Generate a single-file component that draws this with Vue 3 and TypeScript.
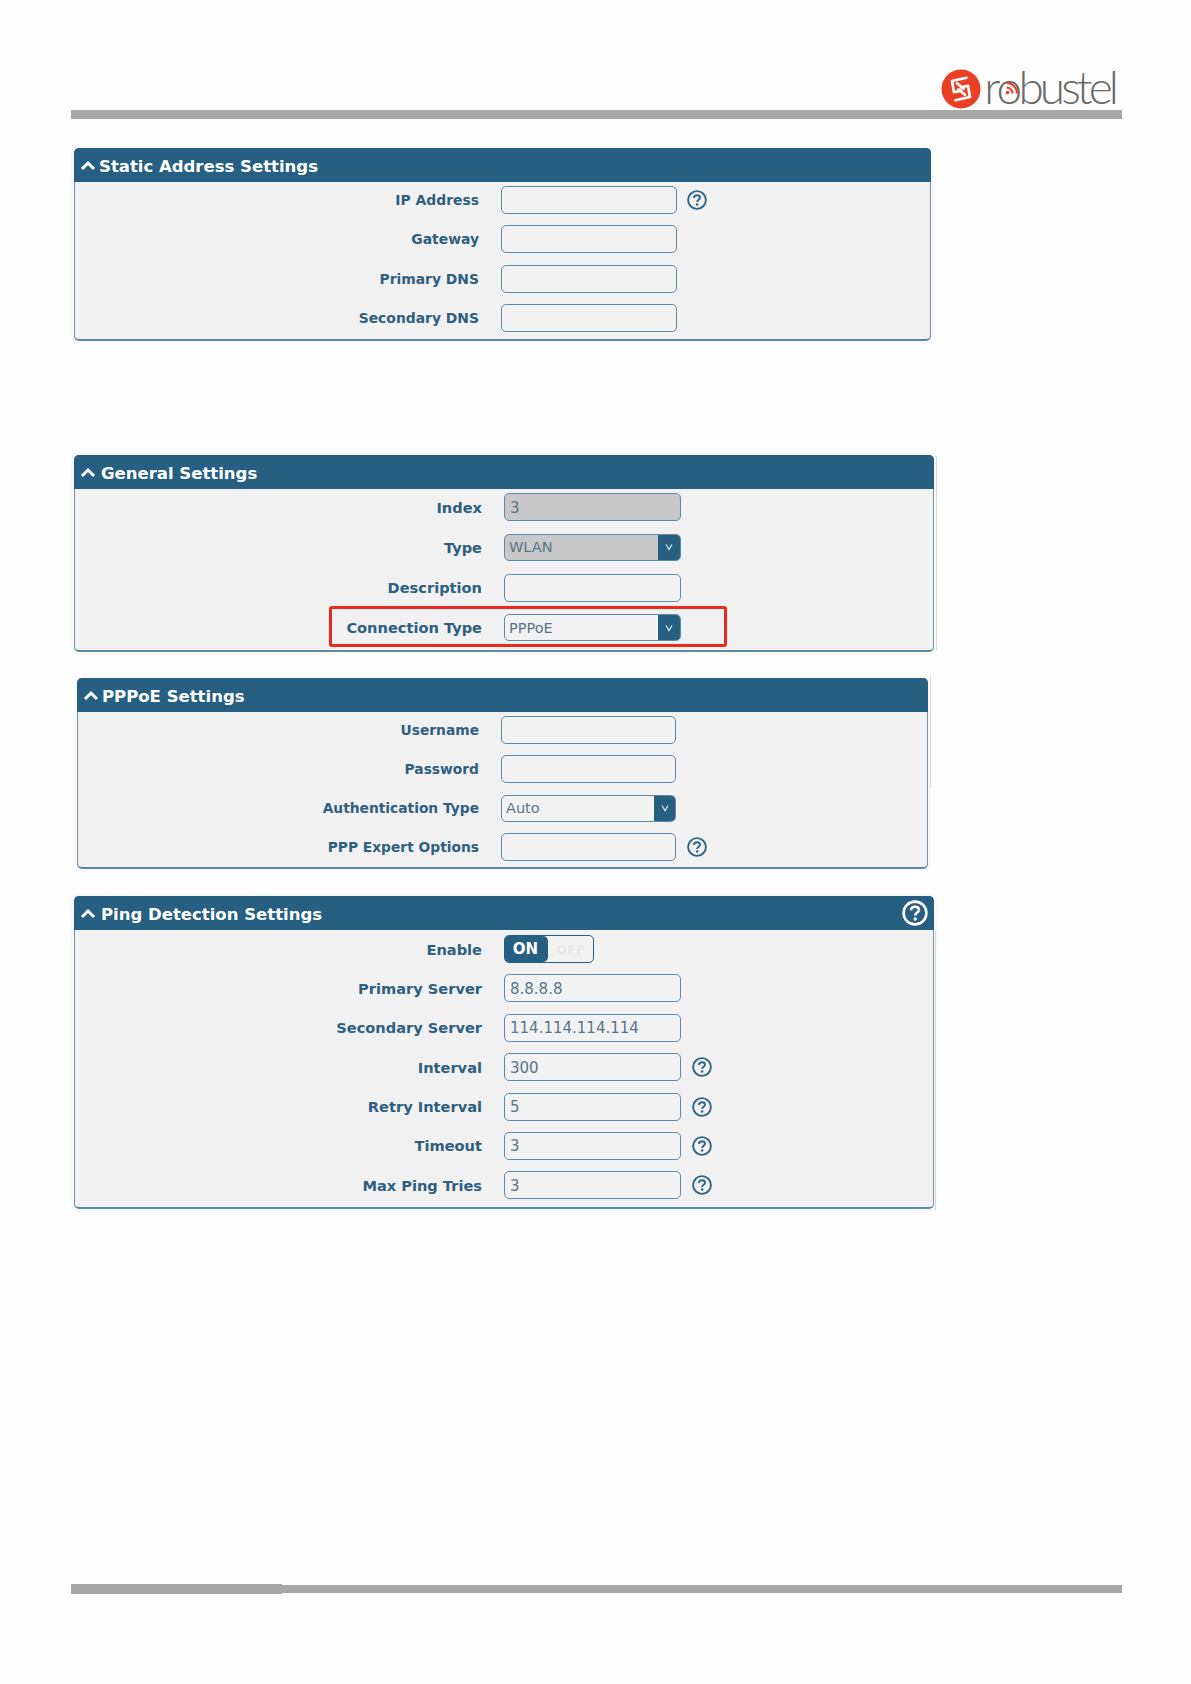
<script setup lang="ts">
interface Row {
  label: string
  kind?: 'input' | 'select' | 'toggle'
  value?: string
  disabled?: boolean
  help?: boolean
  mark?: boolean
}
interface Panel {
  title: string
  cls: string
  help?: boolean
  rows: Row[]
}

const panels: Panel[] = [
  {
    title: 'Static Address Settings',
    cls: 'p-static',
    rows: [
      { label: 'IP Address', help: true },
      { label: 'Gateway' },
      { label: 'Primary DNS' },
      { label: 'Secondary DNS' },
    ],
  },
  {
    title: 'General Settings',
    cls: 'p-general',
    rows: [
      { label: 'Index', value: '3', disabled: true },
      { label: 'Type', kind: 'select', value: 'WLAN', disabled: true },
      { label: 'Description' },
      { label: 'Connection Type', kind: 'select', value: 'PPPoE', mark: true },
    ],
  },
  {
    title: 'PPPoE Settings',
    cls: 'p-pppoe',
    rows: [
      { label: 'Username' },
      { label: 'Password' },
      { label: 'Authentication Type', kind: 'select', value: 'Auto' },
      { label: 'PPP Expert Options', help: true },
    ],
  },
  {
    title: 'Ping Detection Settings',
    cls: 'p-ping',
    help: true,
    rows: [
      { label: 'Enable', kind: 'toggle' },
      { label: 'Primary Server', value: '8.8.8.8' },
      { label: 'Secondary Server', value: '114.114.114.114' },
      { label: 'Interval', value: '300', help: true },
      { label: 'Retry Interval', value: '5', help: true },
      { label: 'Timeout', value: '3', help: true },
      { label: 'Max Ping Tries', value: '3', help: true },
    ],
  },
]
</script>

<template>
  <div class="page">
    <header class="top">
      <div class="logo">
        <svg class="mark" viewBox="0 0 40 40" aria-hidden="true">
          <circle cx="20" cy="20" r="19.5" fill="#ea3f24" />
          <path d="M25.5 8.8 L11 12 L13 23.2 L20 21.6 M16 14.2 L22.6 19.6 M14.5 31.2 L29 28 L27 16.8 L20 18.4 M24 25.8 L17.4 20.4" fill="none" stroke="#fff" stroke-width="2.7" stroke-linejoin="round" stroke-linecap="round" />
        </svg>
        <span class="word">r<span class="o">o<svg class="wifi" viewBox="0 0 14 14" aria-hidden="true"><path d="M1.5 6.5 A6 6 0 0 1 7.5 12.5 M1.5 2 A10.5 10.5 0 0 1 12 12.5" fill="none" stroke="#ea3f24" stroke-width="2" /><circle cx="2.5" cy="11.5" r="1.8" fill="#ea3f24" /></svg></span>bustel</span>
      </div>
    </header>
    <div class="rule"></div>

    <main class="panels">
      <section v-for="panel in panels" :key="panel.title" class="panel" :class="panel.cls">
        <h2 class="head">
          <svg class="caret" viewBox="0 0 16 11" aria-hidden="true">
            <path d="M2 9 L8 3 L14 9" fill="none" stroke="#fff" stroke-width="3" />
          </svg>
          <span class="title">{{ panel.title }}</span>
          <svg v-if="panel.help" class="help-big" viewBox="0 0 26 26" aria-hidden="true">
            <circle cx="13" cy="13" r="11.4" fill="none" stroke="#fff" stroke-width="2.6" />
            <path d="M9 10.2 C9 7.8 10.8 6.8 13 6.8 C15.4 6.8 17 8 17 10 C17 12.6 13.2 12.6 13.2 15.6" fill="none" stroke="#fff" stroke-width="2.6" />
            <circle cx="13.2" cy="19" r="1.7" fill="#fff" />
          </svg>
        </h2>
        <div class="body">
          <div v-for="row in panel.rows" :key="row.label" class="row">
            <span v-if="row.mark" class="highlight"></span>
            <label class="label">{{ row.label }}</label>
            <div v-if="row.kind === 'toggle'" class="toggle">
              <span class="on">ON</span>
              <span class="off">OFF</span>
            </div>
            <div v-else-if="row.kind === 'select'" class="field select" :class="{ disabled: row.disabled }">
              <span class="val">{{ row.value }}</span>
              <span class="arrow">
                <svg viewBox="0 0 10 8" aria-hidden="true"><path d="M2 1.5 L5 6.5 L8 1.5" fill="none" stroke="#dfe8ee" stroke-width="1.2" /></svg>
              </span>
            </div>
            <div v-else class="field" :class="{ disabled: row.disabled }">
              <span class="val pad">{{ row.value }}</span>
            </div>
            <svg v-if="row.help" class="help" viewBox="0 0 20 20" aria-hidden="true">
              <circle cx="10" cy="10" r="8.9" fill="none" stroke="#2f6586" stroke-width="1.9" />
              <path d="M7 7.9 C7 6 8.4 5.2 10 5.2 C11.8 5.2 13 6.2 13 7.7 C13 9.7 10.1 9.7 10.1 12" fill="none" stroke="#2f6586" stroke-width="1.9" />
              <circle cx="10.1" cy="14.6" r="1.25" fill="#2f6586" />
            </svg>
          </div>
        </div>
      </section>
    </main>

    <footer class="rule-bottom"></footer>
  </div>
</template>

<style scoped>
.page {
  width: 1191px;
  height: 1684px;
  background: #fefefe;
  overflow: hidden;
  font-family: "DejaVu Sans", Verdana, sans-serif;
}
.top {
  height: 110px;
  padding-right: 76px;
  display: flex;
  justify-content: flex-end;
  align-items: flex-start;
  box-sizing: border-box;
}
.logo {
  margin-top: 69px;
  display: flex;
  align-items: center;
  gap: 3px;
  height: 40px;
}
.mark {
  width: 40px;
  height: 40px;
  display: block;
}
.word {
  font-family: Lato, Roboto, sans-serif;
  font-weight: 300;
  font-size: 46px;
  line-height: 40px;
  letter-spacing: -3.9px;
  color: #6a6a6a;
  margin-top: -5px;
}
.o {
  position: relative;
  display: inline-block;
}
.wifi {
  position: absolute;
  left: 8px;
  top: 14px;
  width: 14px;
  height: 14px;
}
.rule {
  margin: 0 69px 0 71px;
  height: 9px;
  background: #a8a8a8;
}
.panels {
  display: flex;
  flex-direction: column;
  align-items: flex-start;
  padding-top: 29px;
}
.panel {
  position: relative;
  box-sizing: border-box;
  background: #f1f1f1;
  border: 1px solid #6f93aa;
  border-bottom: 2px solid #5f8aa5;
  border-radius: 5px;
  box-shadow: 0 0 0 3px #f8f8f8;
  --width: 177px;
  --help-gap: 11px;
  --arrow: 22px;
}
.p-static {
  width: 857px;
  height: 193px;
  margin-left: 74px;
  --gap: 11.3px;
  --pad: 4px;
  --label: 404px;
  --input-left: 22px;
  --fs: 13.9px;
  --width: 176px;
  --help-gap: 10px;
  --title-left: 1px;
}
.p-general {
  width: 860px;
  height: 197px;
  margin-left: 74px;
  margin-top: 114px;
  --gap: 12.3px;
  --pad: 4px;
  --label: 407px;
  --input-left: 22px;
  --fs: 14.6px;
  --title-left: 3px;
}
.p-pppoe {
  width: 851px;
  height: 191px;
  margin-left: 77px;
  margin-top: 26px;
  --gap: 11px;
  --pad: 4px;
  --label: 401px;
  --input-left: 22px;
  --fs: 13.8px;
  --width: 175px;
  --title-left: 1px;
  --arrow: 21px;
}
.p-ping {
  width: 860px;
  height: 313px;
  margin-left: 74px;
  margin-top: 27px;
  --gap: 11.4px;
  --pad: 5px;
  --label: 407px;
  --input-left: 22px;
  --fs: 14.6px;
  --title-left: 3px;
}
.p-general::after,
.p-pppoe::after,
.p-ping::after {
  content: "";
  position: absolute;
  width: 1px;
  background: #d3d9dd;
}
.p-general::after {
  right: -4px;
  top: 0;
  bottom: 0;
}
.p-pppoe::after {
  right: -4px;
  top: -5px;
  height: 114px;
}
.p-ping::after {
  right: -3px;
  top: 34px;
  bottom: -4px;
}
.head {
  margin: -1px -1px 0;
  height: 34px;
  background: #265f82;
  color: #fff;
  border-radius: 5px 5px 0 0;
  font-size: 16.5px;
  font-weight: 700;
  display: flex;
  align-items: center;
  padding: 0 6px;
  gap: 2px;
}
.title {
  margin-left: var(--title-left);
  padding-top: 2px;
}
.caret {
  width: 16px;
  height: 11px;
  flex: none;
}
.help-big {
  margin-left: auto;
  width: 26px;
  height: 26px;
}
.body {
  display: flex;
  flex-direction: column;
  gap: var(--gap);
  padding-top: var(--pad);
}
.row {
  position: relative;
  height: 28px;
  display: flex;
  align-items: center;
}
.label {
  width: var(--label);
  flex: none;
  text-align: right;
  color: #2f5f80;
  font-weight: 700;
  font-size: var(--fs);
  white-space: nowrap;
}
.field {
  margin-left: var(--input-left);
  width: var(--width);
  height: 28px;
  box-sizing: border-box;
  border: 1.5px solid #5f8aa5;
  border-radius: 5px;
  background: #f2f2f2;
  display: flex;
  align-items: center;
  overflow: hidden;
  color: #557688;
  font-size: 15px;
}
.field.disabled {
  background: #c8c8c8;
}
.select {
  height: 27px;
  padding-left: 4px;
  font-size: 14.5px;
}
.val {
  flex: 1;
  white-space: nowrap;
}
.val.pad {
  padding: 1px 0 0 5px;
}
.arrow {
  flex: none;
  width: var(--arrow);
  height: 100%;
  background: #265f82;
  display: flex;
  align-items: center;
  justify-content: center;
}
.arrow svg {
  width: 10px;
  height: 8px;
}
.help {
  width: 20px;
  height: 20px;
  margin-left: var(--help-gap);
  flex: none;
}
.toggle {
  margin-left: var(--input-left);
  width: 90px;
  height: 28px;
  box-sizing: border-box;
  border: 1.5px solid #265f82;
  border-radius: 5px;
  display: flex;
  overflow: hidden;
  font-size: 15px;
  font-weight: 700;
  background: #f2f2f2;
}
.on {
  width: 43px;
  background: #265f82;
  color: #fff;
  display: flex;
  align-items: center;
  justify-content: center;
  border-radius: 0 5px 5px 0;
  padding-right: 2px;
  box-sizing: border-box;
}
.off {
  flex: 1;
  color: #e8e8e8;
  display: flex;
  align-items: center;
  justify-content: center;
  font-size: 13px;
}
.highlight {
  position: absolute;
  left: 254px;
  width: 398px;
  top: -8px;
  height: 41px;
  box-sizing: border-box;
  border: 3px solid #ea2a1e;
  border-radius: 3px;
  pointer-events: none;
}
.rule-bottom {
  margin: 376px 69px 0 71px;
  height: 8px;
  background: #a6a6a6;
  position: relative;
}
.rule-bottom::before {
  content: "";
  position: absolute;
  left: 0;
  top: -1px;
  width: 211px;
  height: 10px;
  background: #a6a6a6;
}
</style>
